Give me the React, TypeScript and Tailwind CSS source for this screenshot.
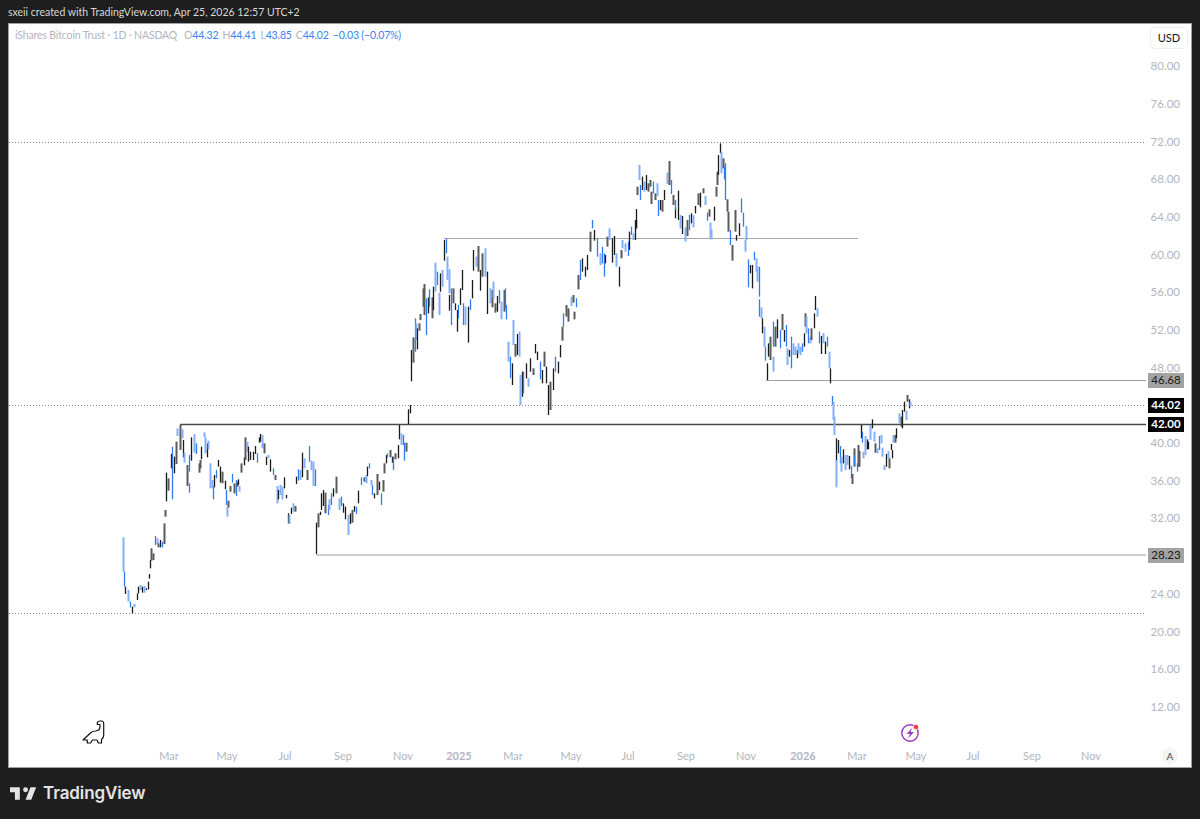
const font = "font-['Lato',sans-serif]";

// bars traced off the chart: x y1 y2 tone (k black, g grey, u blue, l light blue), in 3x crop coords
const segA = `68 412 515 l;71 515 560 u;76 560 582 k;84 570 605 l;90 605 622 u;97 620 640 k;103 612 622 l;110 580 600 k;113 560 580 k;120 555 570 l;125 560 578 k;132 558 578 l;138 565 570 k;143 545 568 k;146 522 536 k;150 480 505 k;153 445 482 g;158 460 480 g;164 408 435 u;170 415 432 l;175 430 442 g;181 420 442 k;186 425 442 u;191 370 432 g;194 330 350 g;199 218 304 k;205 235 272 g;212 162 205 k;217 140 298 u;221 170 220 k;227 125 192 g;232 85 108 l;240 75 150 g;246 88 115 l;248 120 172 k;253 158 188 l;260 195 258 g;267 165 215 u;268 250 278 u;274 112 182 k;282 102 158 l;289 130 162 u;296 190 218 g;300 180 205 g;304 140 178 k;312 97 112 l;315 112 160 l;320 130 172 k;324 122 148 l;330 190 265 l;335 240 265 l;339 260 298 u;343 225 262 k;348 210 235 u;353 180 200 k;360 200 248 k;367 215 250 g;374 242 268 k;377 270 315 u;381 320 350 l;384 302 322 g;390 258 275 g;396 222 248 u;403 250 280 g;407 240 288 u;411 245 260 g;415 238 255 k;418 258 275 l;424 190 218 g;431 172 196 k;436 112 180 g;440 125 155 l;445 140 185 k;451 155 180 k;458 155 180 k;464 138 162 k;470 160 188 u;476 112 128 k;479 102 125 k;487 105 145 l;491 130 160 g;497 170 195 k;503 165 175 l;511 178 215 k;518 205 225 u;524 225 240 g;531 258 310 l;534 270 298 k;540 255 285 l;546 260 298 l;552 232 265 k;558 285 295 k;564 340 370 k;567 345 372 l;572 323 342 k;578 310 335 l;584 318 335 g;587 230 252 k;594 208 242 u;600 210 240 l;606 158 232 k;612 175 205 l;620 210 240 g;627 138 185 u;634 182 210 l;640 185 258 l;645 208 258 u;649 368 462 k;654 340 382 g;660 335 345 k;664 280 330 k;668 270 318 k;676 278 340 g;683 315 345 u;688 298 330 l;694 280 315 u;700 265 290 k;708 230 280 g;718 295 330 l;724 290 318 u;730 310 338 k;736 320 358 k;744 345 405 l;750 340 372 k;756 330 368 g;762 318 335 k;768 320 342 u;775 272 310 k;783 232 255 u;792 232 245 g;797 225 250 l;802 200 228 k;808 190 205 u;812 240 255 l;816 255 285 u;822 280 295 k;830 222 285 g;836 245 270 k;844 280 315 u;849 240 275 g;853 190 220 g;858 165 190 k;862 160 172 u;869 150 172 g;875 170 188 k;880 170 210 u;885 160 178 g;893 135 175 k;897 75 118 k;904 100 135 l;908 105 135 u;913 128 182 u;918 128 155 g;923 28 72 k;930 15 40 k`;
const segB = `33 390 484 k;38 352 428 g;44 295 395 u;48 310 360 l;52 325 388 k;57 310 332 g;61 282 300 g;68 205 260 g;72 192 285 g;78 235 345 u;85 232 280 k;88 208 260 u;95 232 295 g;100 200 270 k;106 128 215 l;110 155 195 u;117 218 285 l;121 160 215 k;126 150 200 l;133 60 122 k;139 55 100 u;141 110 180 l;146 148 220 l;148 225 272 k;154 205 315 u;159 205 250 g;165 250 270 k;170 270 335 k;175 255 295 u;181 205 255 k;187 150 210 k;190 250 315 u;196 260 315 l;203 260 368 k;209 238 270 u;215 180 235 k;220 90 152 k;228 110 140 l;234 78 155 g;241 150 212 k;247 100 170 g;255 85 170 l;262 155 282 k;269 205 250 l;275 210 262 g;280 185 235 l;285 250 278 g;290 228 275 k;297 210 250 u;303 245 298 l;311 210 275 g;316 205 265 u;319 255 298 u;325 365 425 l;331 410 475 u;339 300 375 l;337 430 495 k;345 372 410 g;350 342 405 k;357 335 410 l;361 465 555 l;365 455 530 k;370 455 520 u;378 430 475 k;384 475 500 l;391 415 455 k;398 445 465 g;404 372 400 k;412 395 420 k;420 425 478 u;425 450 490 k;431 395 440 g;437 440 490 k;445 495 585 k;451 485 570 g;460 445 510 k;466 410 455 u;473 425 460 k;480 375 412 k;486 320 362 g;490 280 320 u;497 255 290 g;505 265 305 g;513 230 258 l;519 225 248 g;523 275 298 g;528 235 262 u;535 165 208 g;540 120 180 u;546 115 155 k;555 140 170 k;562 105 150 k;570 35 95 g;576 0 25 u;582 30 62 k;590 55 110 u;600 100 135 l;606 80 130 u;612 100 170 u;616 105 130 k;622 50 80 g;628 25 60 l;637 55 128 k;642 48 105 k;648 100 140 l;657 140 200 k;662 90 115 g;667 60 85 l;675 70 95 l;683 65 108 u;687 35 90 k;692 20 45 u;700 40 60 l;704 0 60 k;708 0 25 k`;
const segC = `108 237 295 k;117 105 150 l;112 170 195 g;120 165 210 u;126 140 180 k;132 155 185 l;139 135 180 k;145 160 185 g;150 150 170 g;153 185 222 g;158 155 190 u;165 190 210 g;170 160 198 l;173 210 258 u;179 210 240 k;186 210 245 g;192 180 210 k;200 128 162 l;206 93 165 g;212 150 192 u;219 195 225 g;226 235 265 k;225 210 240 u;234 182 270 k;240 255 295 l;247 258 312 k;255 292 335 l;261 270 318 g;268 255 300 u;272 250 280 k;280 255 292 l;286 228 250 k;294 190 225 g;300 188 232 k;308 175 190 g;314 198 225 l;320 248 272 u;326 238 260 g;330 278 328 l;334 298 328 l;341 230 272 k;348 170 200 g;351 125 165 g;355 75 135 k;361 40 70 k;364 65 130 l;369 85 115 g;371 110 148 u;376 100 210 u;381 208 245 g;384 245 305 g;391 300 345 u;396 345 392 g;404 240 305 g;408 315 332 k;416 280 318 k;424 205 248 u;430 248 290 u;437 288 330 l;435 330 365 l;445 388 472 u;451 405 430 k;457 405 475 k;463 365 390 u;468 385 425 l;472 410 455 l;476 410 500 u;478 508 560 u;484 532 565 l;486 565 610 k;493 590 650 l;496 650 692 u;500 700 750 k;505 640 680 k;511 620 690 g;518 575 650 u;520 680 725 l;524 590 650 g;531 568 625 k;540 600 655 u;547 552 600 g;552 600 635 k;558 585 650 u;562 655 705 l;567 660 680 k;573 620 715 u;578 640 675 l;585 650 675 l;591 660 685 k;594 640 670 l;601 650 675 l;606 640 665 u;612 610 650 k;616 550 590 g;619 560 610 l;625 595 640 u;630 620 640 l;634 595 630 g;641 550 595 k;646 498 540 k;652 535 560 l;657 605 640 u;662 618 672 k;668 610 640 l;675 635 672 k;680 620 650 u;687 665 715 l;690 715 760 k`;
const segD = `65 78 105 u;69 95 150 l;72 140 195 l;78 205 275 k;78 270 352 l;85 210 250 k;90 228 280 u;94 260 305 l;100 238 280 k;104 255 300 l;110 255 285 l;116 258 298 k;122 288 325 u;126 312 342 g;132 235 290 g;133 255 288 u;140 280 305 u;143 225 290 g;147 243 290 g;152 165 205 k;155 185 218 u;159 245 265 l;166 198 255 l;172 208 238 k;175 215 238 k;181 165 210 l;187 148 175 k;193 185 215 l;196 220 248 g;201 235 250 l;207 198 240 u;214 195 220 l;216 233 260 l;222 285 300 l;228 252 290 k;234 243 265 l;237 265 295 g;242 222 240 k;247 240 265 k;250 195 218 l;254 195 218 g;258 175 205 k;268 130 160 l;272 140 170 g;276 120 175 k;283 95 125 k;287 122 150 l;291 75 95 g;296 88 115 k;300 95 110 l`;

const tones: Record<string, { stroke: string; width: number }> = {
  k: { stroke: '#1a1a1a', width: 1.3 },
  g: { stroke: '#5a5a5a', width: 2 },
  u: { stroke: '#2f7bf5', width: 1.3 },
  l: { stroke: '#82b0f9', width: 2 },
};

function parseBars(seg: string, ox: number, oy: number) {
  return seg.split(';').map((row) => {
    const [x, y1, y2, tone] = row.split(' ');
    return { x: ox + Number(x) / 3, y1: oy + Number(y1) / 3, y2: oy + Number(y2) / 3, tone };
  });
}

const bars = [
  ...parseBars(segA, 100, 400),
  ...parseBars(segB, 400, 220),
  ...parseBars(segC, 600, 130),
  ...parseBars(segD, 810, 370),
];

const prices = ['80.00', '76.00', '72.00', '68.00', '64.00', '60.00', '56.00', '52.00', '48.00', '44.00', '40.00', '36.00', '32.00', '28.00', '24.00', '20.00', '16.00', '12.00'];
const hiddenPrices = ['44.00', '28.00'];

const months: { label: string; x: number; year?: boolean }[] = [
  { label: 'Mar', x: 169 },
  { label: 'May', x: 227 },
  { label: 'Jul', x: 285 },
  { label: 'Sep', x: 343 },
  { label: 'Nov', x: 403 },
  { label: '2025', x: 459, year: true },
  { label: 'Mar', x: 513 },
  { label: 'May', x: 571 },
  { label: 'Jul', x: 628 },
  { label: 'Sep', x: 686 },
  { label: 'Nov', x: 746 },
  { label: '2026', x: 803, year: true },
  { label: 'Mar', x: 857 },
  { label: 'May', x: 916 },
  { label: 'Jul', x: 973 },
  { label: 'Sep', x: 1032 },
  { label: 'Nov', x: 1091 },
];

function PriceTag({ value, dark, className }: { value: string; dark?: boolean; className: string }) {
  return (
    <div
      className={`absolute left-[1139px] flex h-[15px] w-[36px] items-center justify-center pb-[1px] text-[11.5px] ${
        dark ? 'bg-black font-bold text-white' : 'bg-[#a3a3a3] text-[#1a1a1a]'
      } ${className}`}
    >
      {value}
    </div>
  );
}

function Chart() {
  return (
    <svg className="block h-[720px] w-[1137px]" viewBox="9 24 1137 720">
      <g stroke="#8a8a8a" strokeWidth="1" strokeDasharray="1 2">
        <line x1="9" x2="1146" y1="142.5" y2="142.5" />
        <line x1="9" x2="1146" y1="405.5" y2="405.5" />
        <line x1="9" x2="1146" y1="613.5" y2="613.5" />
      </g>
      <line x1="444" x2="858" y1="238.5" y2="238.5" stroke="#a8a8a8" strokeWidth="1.2" />
      <line x1="766" x2="1146" y1="380.5" y2="380.5" stroke="#a0a0a0" strokeWidth="1.2" />
      <line x1="180" x2="1146" y1="424.5" y2="424.5" stroke="#4a4a4a" strokeWidth="1.5" />
      <line x1="316" x2="1146" y1="555" y2="555" stroke="#bdbdbd" strokeWidth="1.5" />
      {bars.map((b, i) => (
        <line
          key={i}
          x1={Math.round(b.x) + 0.5}
          x2={Math.round(b.x) + 0.5}
          y1={b.y1}
          y2={b.y2}
          stroke={tones[b.tone].stroke}
          strokeWidth={tones[b.tone].width}
        />
      ))}
      {/* dino */}
      <path
        d="M83 740 L91 732.5 Q93 731 95.5 731 Q100 730.5 100 727 L100 724.5 L97.3 724.5 L97.3 722.8 Q98 721 100 721 L102 721 Q103.7 721.3 103.7 723.5 L103.7 735 Q103.7 738 101.5 739.5 L101.5 743 L98.3 743 L97 740 L92.5 740 L90.5 743 L87.3 743 L87.3 740 Z"
        fill="#fff"
        stroke="#111"
        strokeWidth="1.2"
        strokeLinejoin="round"
      />
      {/* earnings bolt */}
      <circle cx="910" cy="733" r="8.2" fill="#fff" stroke="#9c35bd" strokeWidth="1.4" />
      <path d="M912.5 727.5 L906.5 733.8 L910 733.8 L908 738.5 L914 732 L910.4 732 Z" fill="#9c35bd" />
      <circle cx="916" cy="727" r="2.6" fill="#f23645" stroke="#fff" strokeWidth="0.6" />
    </svg>
  );
}

export default function App() {
  return (
    <div className={`flex h-[819px] w-[1200px] flex-col bg-[#1e1e1e] ${font}`}>
      <div className="flex h-[23px] items-center pl-[8px] pt-[2px] text-[10.5px] text-[#d6d6d6]">
        sxeii created with TradingView.com, Apr 25, 2026 12:57 UTC+2
      </div>

      <div className="relative ml-[8px] flex h-[745px] w-[1184px] flex-col border border-[#a0a0a0] bg-white">
        <div className="absolute left-[6px] top-[5px] flex h-[14px] items-center text-[10.5px] tracking-[-0.15px] text-[#b2b5be]">
          <span>iShares Bitcoin Trust · 1D · NASDAQ</span>
          <span className="ml-[7px]">O<span className="text-[#3b82f6]">44.32</span></span>
          <span className="ml-[4px]">H<span className="text-[#3b82f6]">44.41</span></span>
          <span className="ml-[4px]">L<span className="text-[#3b82f6]">43.85</span></span>
          <span className="ml-[4px]">C<span className="text-[#3b82f6]">44.02</span></span>
          <span className="ml-[4px] text-[#3b82f6]">−0.03 (−0.07%)</span>
        </div>

        <div className="flex">
          <Chart />
          <div className="flex h-[720px] w-[45px] flex-col pt-[23px]">
            {prices.map((p) => (
              <div
                key={p}
                className={`flex h-[37.7px] shrink-0 items-center justify-end pr-[11px] text-[11.5px] text-[#b2b5be] ${
                  hiddenPrices.includes(p) ? 'invisible' : ''
                }`}
              >
                {p}
              </div>
            ))}
          </div>
        </div>

        <div className="relative flex h-[23px] items-center pt-[2px] text-[11px] text-[#b2b5be]">
          {months.map((m, i) => (
            <div
              key={i}
              className={`flex w-0 justify-center ${m.year ? 'font-bold' : ''}`}
              style={{ marginLeft: m.x - (i ? months[i - 1].x : 9) }}
            >
              {m.label}
            </div>
          ))}
          <div className="absolute left-[1153px] top-[4px] flex h-[16px] w-[16px] items-center justify-center rounded-full bg-[#f4f4f4] text-[10px] text-[#4a4a4a]">
            A
          </div>
        </div>

        <div className="absolute left-[1141px] top-[3px] flex h-[22px] w-[38px] items-center justify-center rounded-[5px] border border-[#eeeeee] bg-white text-[11px] text-[#131722]">
          USD
        </div>
        <PriceTag value="46.68" className="top-[349px]" />
        <PriceTag value="44.02" dark className="top-[374px]" />
        <PriceTag value="42.00" dark className="top-[393px]" />
        <PriceTag value="28.23" className="top-[524px]" />
      </div>

      <div className="flex flex-1 items-center pl-[10px]">
        <svg className="h-[19px] w-[27px]" viewBox="2 4 33 19" fill="#e4e4e4">
          <path d="M14 6H2v6h6v9h6V6Zm14 15h-7l6-15h7l-6 15Zm-7-9a3 3 0 1 0 0-6 3 3 0 0 0 0 6Z" />
        </svg>
        <span className="ml-[6px] font-['Inter',sans-serif] text-[17px] font-semibold tracking-[-0.1px] text-[#e4e4e4]">TradingView</span>
      </div>
    </div>
  );
}
